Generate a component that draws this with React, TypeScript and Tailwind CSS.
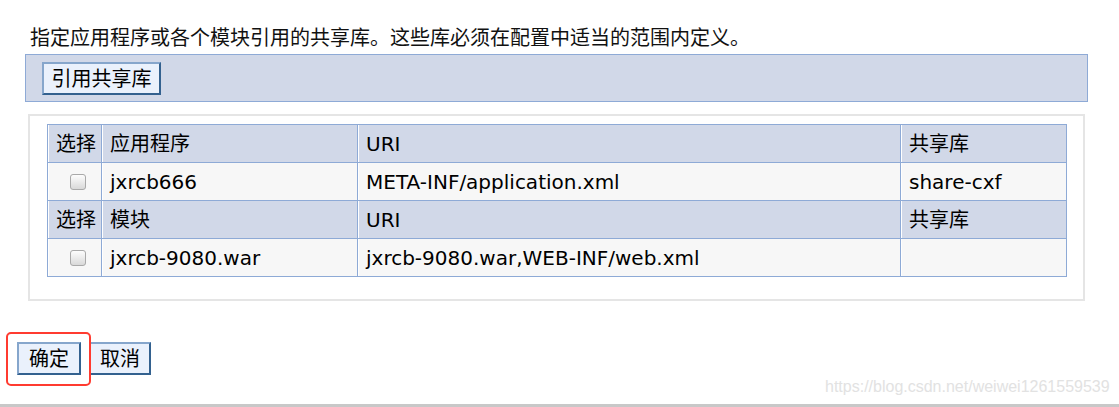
export default function App() {
  const font = { fontFamily: '"DejaVu Sans", "Noto Sans CJK SC", sans-serif' };
  const btn =
    "flex h-[33px] items-center justify-center border-2 border-t-[#86a6cc] border-l-[#86a6cc] border-b-[#33618f] border-r-[#33618f] bg-[#eaf1fc] text-[20px] leading-none text-black whitespace-nowrap";
  const th =
    "h-[38px] whitespace-nowrap border border-[#8eaad6] bg-[#d1d8e8] px-[8px] text-left align-middle font-normal shadow-[inset_1px_0_0_#ffffff]";
  const td =
    "h-[38px] whitespace-nowrap border border-[#8eaad6] bg-[#f7f7f7] px-[8px] text-left align-middle shadow-[inset_1px_0_0_#ffffff]";

  const groups = [
    { label: "应用程序", name: "jxrcb666", uri: "META-INF/application.xml", lib: "share-cxf" },
    { label: "模块", name: "jxrcb-9080.war", uri: "jxrcb-9080.war,WEB-INF/web.xml", lib: "" },
  ];

  return (
    <div
      className="relative box-border flex h-[407px] w-full flex-col border-b-[3px] border-[#c8c8c8] bg-white text-black"
      style={font}
    >
      <div className="pl-[25px] pt-[25px]">
        <p className="ml-[5px] text-[20px] leading-[26px] text-[#111]">
          指定应用程序或各个模块引用的共享库。这些库必须在配置中适当的范围内定义。
        </p>

        {/* toolbar */}
        <div className="mt-[3px] h-[48px] w-[1063px] border border-[#8eaad6] bg-[#d1d8e8] pl-[16px] pt-[7px]">
          <button className={`${btn} h-[32px] w-[119px]`}>引用共享库</button>
        </div>

        {/* table panel */}
        <div className="ml-[3px] mt-[12px] h-[187px] w-[1057px] border-2 border-[#e5e5e5] bg-white pl-[17px] pt-[8px]">
          <table className="w-[1019px] table-fixed border-collapse text-[20px] leading-none">
            <colgroup>
              <col className="w-[54px]" />
              <col className="w-[256px]" />
              <col className="w-[543px]" />
              <col className="w-[166px]" />
            </colgroup>
            <tbody>
              {groups.map((g) => (
                <>
                  <tr key={g.label + "-h"}>
                    <th className={`${th} px-[5px]`}>选择</th>
                    <th className={th}>{g.label}</th>
                    <th className={th}>URI</th>
                    <th className={th}>共享库</th>
                  </tr>
                  <tr key={g.label + "-d"}>
                    <td className={`${td} px-0`}>
                      <div className="flex pl-[14px]">
                        <input
                          type="checkbox"
                          className="m-0 h-[16px] w-[16px] appearance-none rounded-[3px] border border-[#a9a9a9] bg-gradient-to-b from-[#fdfdfd] to-[#d9d9d9]"
                        />
                      </div>
                    </td>
                    <td className={td}>{g.name}</td>
                    <td className={td}>{g.uri}</td>
                    <td className={td}>{g.lib}</td>
                  </tr>
                </>
              ))}
            </tbody>
          </table>
        </div>
      </div>

      {/* action buttons */}
      <div className="ml-[17px] mt-[41px] flex gap-[8px]">
        <button className={`${btn} w-[64px]`}>确定</button>
        <button className={`${btn} w-[62px]`}>取消</button>
      </div>

      {/* annotation box */}
      <div className="absolute left-[6px] top-[332px] h-[54px] w-[85px] rounded-[5px] border-2 border-[#ff3b30]" />

      {/* watermark */}
      <span
        className="absolute left-[825px] top-[377px] text-[16px] leading-[20px] text-[#e2e2e2]"
        style={{ fontFamily: '"Liberation Sans", Arial, sans-serif' }}
      >
        https://blog.csdn.net/weiwei1261559539
      </span>
    </div>
  );
}
